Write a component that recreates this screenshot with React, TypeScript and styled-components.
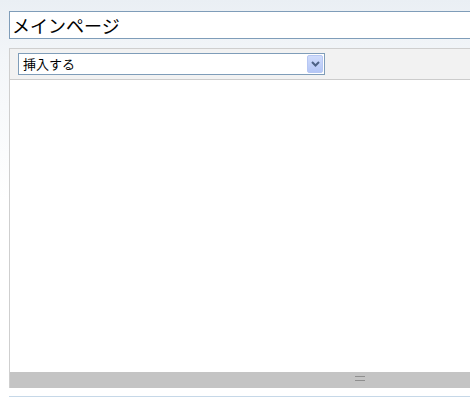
import React from "react";
import styled, { createGlobalStyle } from "styled-components";

const Global = createGlobalStyle`
  html, body {
    margin: 0;
    padding: 0;
    overflow: hidden;
    background: linear-gradient(#eaeff4 0px, #f3f6f9 60px, #ffffff 200px);
    font-family: "Noto Sans CJK JP", "Liberation Sans", sans-serif;
  }
`;

const Page = styled.div`
  width: 490px;
  height: 397px;
  padding: 11px 0 0 9px;
  box-sizing: border-box;
  display: flex;
  flex-direction: column;
`;

const TitleInput = styled.div`
  height: 28px;
  box-sizing: border-box;
  border: 1px solid #7f9db9;
  background: #fff;
  font-size: 18px;
  line-height: 26px;
  padding-left: 2px;
  color: #000;
  margin-bottom: 9px;
  white-space: nowrap;
`;

const Editor = styled.div`
  border-top: 1px solid #cfcfcf;
  border-left: 1px solid #cfcfcf;
  display: flex;
  flex-direction: column;
`;

const Toolbar = styled.div`
  height: 31px;
  box-sizing: border-box;
  background: #f2f2f2;
  border-bottom: 1px solid #cccccc;
  padding: 4px 0 0 8px;
`;

const Select = styled.div`
  width: 307px;
  height: 22px;
  box-sizing: border-box;
  border: 1px solid #7f9db9;
  background: #fff;
  display: flex;
  align-items: center;
  justify-content: space-between;
  padding: 1px;
`;

const SelectText = styled.span`
  font-size: 13px;
  line-height: 18px;
  padding-left: 3px;
  color: #000;
`;

const DropButton = styled.div`
  width: 16px;
  height: 18px;
  box-sizing: border-box;
  border: 1px solid #b7c7f3;
  border-radius: 2px;
  background: linear-gradient(#d0dcfc, #b4c6f6);
  display: flex;
  align-items: center;
  justify-content: center;
`;

const Content = styled.div`
  height: 292px;
  background: #fff;
`;

const ResizeBar = styled.div`
  height: 16px;
  background: #c4c4c4;
  display: flex;
  align-items: flex-start;
  padding: 4px 0 0 345px;
  box-sizing: border-box;
`;

const Grip = styled.div`
  width: 10px;
  height: 3px;
  border-top: 1px solid #8f8f8f;
  border-bottom: 1px solid #8f8f8f;
`;

const BottomLine = styled.div`
  margin-top: 8px;
  height: 1px;
  background: #c6d8e8;
`;

export default function App() {
  return (
    <>
      <Global />
      <Page>
        <TitleInput>メインページ</TitleInput>
        <Editor>
          <Toolbar>
            <Select>
              <SelectText>挿入する</SelectText>
              <DropButton>
                <svg width="9" height="6" viewBox="0 0 9 6">
                  <path d="M1 1 L4.5 4.5 L8 1" fill="none" stroke="#4d6185" strokeWidth="2" />
                </svg>
              </DropButton>
            </Select>
          </Toolbar>
          <Content />
          <ResizeBar>
            <Grip />
          </ResizeBar>
        </Editor>
        <BottomLine />
      </Page>
    </>
  );
}
